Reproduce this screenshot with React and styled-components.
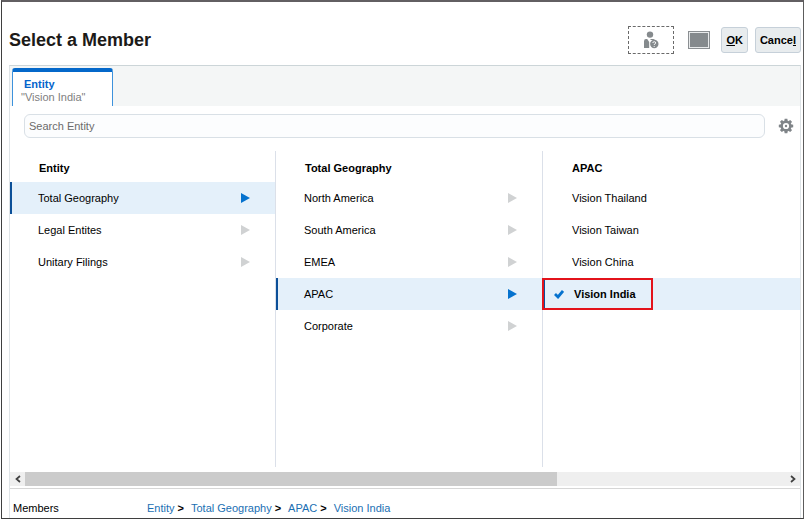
import React from 'react';
import { useState } from 'react';
import styled, { createGlobalStyle } from 'styled-components';

const GlobalStyle = createGlobalStyle`
  * {
    box-sizing: border-box;
  }

  body {
    margin: 0;
    background: #fff;
    color: #000;
    font-family: 'Liberation Sans', Arial, sans-serif;
    font-size: 11px;
    line-height: 14px;
  }

  button,
  input {
    font: inherit;
    color: inherit;
  }
`;

const Dialog = styled.main`
  margin: 0 2px 0 1px;
  padding: 0 2px 0 7px;
  border: 1px solid #3f3f3f;
  border-top: 2px solid #625f62;
  border-right-color: #5c5c5c;
`;

const Header = styled.header`
  display: flex;
  align-items: center;
  justify-content: space-between;
  height: 63px;
  padding-top: 13px;
`;

const Title = styled.h1`
  margin: 0;
  font-size: 18px;
  line-height: 24px;
  color: #1c1a18;
`;

const Actions = styled.div`
  display: flex;
  align-items: center;
`;

const UserButton = styled.button`
  display: flex;
  align-items: center;
  justify-content: center;
  width: 46px;
  height: 28px;
  margin-right: 14px;
  padding: 0;
  background: #fff;
  border: 1px dashed #6a6a6a;
`;

const Swatch = styled.button`
  width: 22px;
  height: 18px;
  margin-right: 11px;
  padding: 0;
  background: #858a8d;
  border: 1px solid #8b8f92;
  box-shadow: inset 0 0 0 1px #e8eaeb;
`;

const Button = styled.button`
  height: 26px;
  padding: 0 4px;
  background: #e8ecee;
  border: 1px solid #c6d0d9;
  border-radius: 3px;
  font-weight: bold;

  & + & {
    margin-left: 7px;
  }
`;

const Panel = styled.section`
  border: 1px solid #dfe4e7;
  border-top-color: #ccd5d8;
  border-bottom: none;
`;

const TabStrip = styled.div`
  display: flex;
  height: 40px;
  padding: 2px 2px 0;
  background: #f4f6f6;
`;

const Tab = styled.button`
  display: flex;
  flex-direction: column;
  width: 101px;
  padding: 6px 8px 0;
  background: #fff;
  border: 1px solid #3d92dc;
  border-top: 4px solid #0468ca;
  border-bottom: none;
  border-radius: 3px 3px 0 0;
  text-align: left;
`;

const TabName = styled.span`
  padding-left: 3px;
  line-height: 13px;
  font-weight: bold;
  color: #0464cc;
`;

const TabValue = styled.span`
  line-height: 13px;
  color: #808080;
`;

const SearchRow = styled.div`
  display: flex;
  align-items: center;
  padding: 8px 6px 0 14px;
`;

const SearchInput = styled.input`
  flex: 1;
  min-width: 0;
  height: 24px;
  padding: 0 4px;
  background: #fcfdfe;
  border: 1px solid #d9e0e6;
  border-radius: 6px;

  &::placeholder {
    color: #6b6b6b;
    opacity: 1;
  }
`;

const GearButton = styled.button`
  display: flex;
  margin-left: 13px;
  padding: 0;
  background: none;
  border: none;
`;

const Columns = styled.div`
  display: grid;
  grid-template-columns: 266fr 267fr 257fr;
  min-height: 316px;
  margin-top: 13px;
`;

const Column = styled.div`
  border-right: 1px solid #dbe0e9;

  &:last-child {
    border-right: none;
  }
`;

const ColumnTitle = styled.h2`
  margin: 0;
  padding: 10px 0 7px 29px;
  font-size: 11px;
  line-height: 14px;
`;

const Row = styled.button`
  position: relative;
  display: flex;
  align-items: center;
  justify-content: space-between;
  width: 100%;
  height: 32px;
  padding: 0 25px 0 ${(props) => (props.$leaf ? 29 : 28)}px;
  background: ${(props) => (props.$selected ? '#e4f0fa' : 'none')};
  border: none;
  box-shadow: ${(props) => (props.$selected ? 'inset 2px 0 #0b4f98' : 'none')};
  text-align: left;
`;

const Picked = styled.span`
  display: flex;
  align-items: center;
  gap: 10px;
  margin-left: -18px;
  font-weight: bold;
`;

const Callout = styled.span`
  position: absolute;
  top: 0;
  left: -1px;
  width: 111px;
  height: 32px;
  border: 2px solid #e3131b;
`;

const ScrollBar = styled.div`
  display: flex;
  height: 14px;
  margin-top: 5px;
  background: #efefef;
`;

const ScrollButton = styled.button`
  display: flex;
  align-items: center;
  justify-content: center;
  width: 15px;
  padding: 0;
  background: none;
  border: none;
`;

const ScrollTrack = styled.div`
  flex: 1;
`;

const ScrollThumb = styled.div`
  width: 70%;
  height: 100%;
  background: #cbcbcb;
`;

const Footer = styled.footer`
  display: flex;
  align-items: center;
  height: 30px;
  margin-top: 2px;
  padding: 9px 3px 0;
  border-top: 1px solid #d6d6d6;
`;

const FooterLabel = styled.span`
  width: 134px;
`;

const Breadcrumb = styled.nav`
  display: flex;
  gap: 7px;
`;

const Crumb = styled.span`
  display: flex;
  gap: 3px;
  font-weight: bold;
`;

const CrumbLink = styled.a`
  color: #1b6fb3;
  font-weight: normal;
  text-decoration: none;
`;

const UserIcon = () => (
  <svg width="16" height="18" viewBox="0 0 16 18" aria-hidden="true">
    <circle cx="7" cy="3.6" r="3.2" fill="#858a8d" />
    <path d="M1 17V10.2Q1 8 3 8H4.2L6.2 11V17ZM7 8H10.5L12 9H8Z" fill="#858a8d" />
    <circle cx="11.3" cy="13" r="4.2" fill="#858a8d" />
    <path
      d="M9.8 11.9Q9.9 10.7 11.3 10.7Q12.8 10.8 12.7 12Q12.5 12.8 11.3 13.4V14M11.2 15V15.9"
      fill="none"
      stroke="#fff"
      strokeWidth="1"
    />
  </svg>
);

const GearIcon = () => (
  <svg width="16" height="16" viewBox="0 0 16 16" aria-hidden="true">
    <g fill="#808589">
      {[0, 45, 90, 135, 180, 225, 270, 315].map((angle) => (
        <path key={angle} d="M6 4L6.7 0.8H9.3L10 4Z" transform={`rotate(${angle} 8 8)`} />
      ))}
    </g>
    <circle cx="8" cy="8" r="4.2" fill="#fff" stroke="#808589" strokeWidth="2.2" />
    <circle cx="8" cy="8" r="1.2" fill="#808589" />
  </svg>
);

const Arrow = ({ active }) => (
  <svg width="9" height="10" viewBox="0 0 9 10" aria-hidden="true">
    <path d="M0 0L9 5L0 10Z" fill={active ? '#0572ce' : '#d0d2d3'} />
  </svg>
);

const CheckIcon = () => (
  <svg width="10" height="10" viewBox="0 0 10 10" aria-hidden="true">
    <path d="M1 5L4 8L9 2" fill="none" stroke="#0572ce" strokeWidth="2.8" />
  </svg>
);

const Chevron = ({ right }) => (
  <svg width="6" height="8" viewBox="0 0 6 8" aria-hidden="true">
    <path d={right ? 'M1 1L4.5 4L1 7' : 'M5 1L1.5 4L5 7'} fill="none" stroke="#404040" strokeWidth="1.7" />
  </svg>
);

const columns = [
  { title: 'Entity', items: ['Total Geography', 'Legal Entites', 'Unitary Filings'] },
  { title: 'Total Geography', items: ['North America', 'South America', 'EMEA', 'APAC', 'Corporate'] },
  { title: 'APAC', leaf: true, items: ['Vision Thailand', 'Vision Taiwan', 'Vision China', 'Vision India'] },
];

const App = () => {
  const [selected, setSelected] = useState(['Total Geography', 'APAC', 'Vision India']);
  const [search, setSearch] = useState('');

  const selectHandler = (index, item) => {
    setSelected(selected.map((name, i) => (i === index ? item : name)));
  };

  const path = ['Entity', ...selected];

  return (
    <>
      <GlobalStyle />
      <Dialog>
        <Header>
          <Title>Select a Member</Title>
          <Actions>
            <UserButton aria-label="User">
              <UserIcon />
            </UserButton>
            <Swatch aria-label="View" />
            <Button>
              <u>O</u>K
            </Button>
            <Button>
              Cance<u>l</u>
            </Button>
          </Actions>
        </Header>
        <Panel>
          <TabStrip role="tablist">
            <Tab role="tab" aria-selected="true">
              <TabName>Entity</TabName>
              <TabValue>"{selected[2]}"</TabValue>
            </Tab>
          </TabStrip>
          <SearchRow>
            <SearchInput
              type="text"
              aria-label="Search Entity"
              placeholder="Search Entity"
              value={search}
              onChange={(e) => setSearch(e.target.value)}
            />
            <GearButton aria-label="Settings">
              <GearIcon />
            </GearButton>
          </SearchRow>
          <Columns>
            {columns.map(({ title, leaf, items }, index) => (
              <Column key={title}>
                <ColumnTitle>{title}</ColumnTitle>
                {items.map((item) => {
                  const active = selected[index] === item;
                  return (
                    <Row key={item} $leaf={leaf} $selected={active} onClick={() => selectHandler(index, item)}>
                      {leaf && active ? (
                        <Picked>
                          <CheckIcon />
                          {item}
                        </Picked>
                      ) : (
                        <span>{item}</span>
                      )}
                      {leaf ? null : <Arrow active={active} />}
                      {leaf && active ? <Callout /> : null}
                    </Row>
                  );
                })}
              </Column>
            ))}
          </Columns>
          <ScrollBar>
            <ScrollButton aria-label="Scroll left">
              <Chevron />
            </ScrollButton>
            <ScrollTrack>
              <ScrollThumb />
            </ScrollTrack>
            <ScrollButton aria-label="Scroll right">
              <Chevron right />
            </ScrollButton>
          </ScrollBar>
          <Footer>
            <FooterLabel>Members</FooterLabel>
            <Breadcrumb>
              {path.map((name, index) => (
                <Crumb key={name}>
                  <CrumbLink href="#">{name}</CrumbLink>
                  {index < path.length - 1 ? <span>&gt;</span> : null}
                </Crumb>
              ))}
            </Breadcrumb>
          </Footer>
        </Panel>
      </Dialog>
    </>
  );
};

export default App;
